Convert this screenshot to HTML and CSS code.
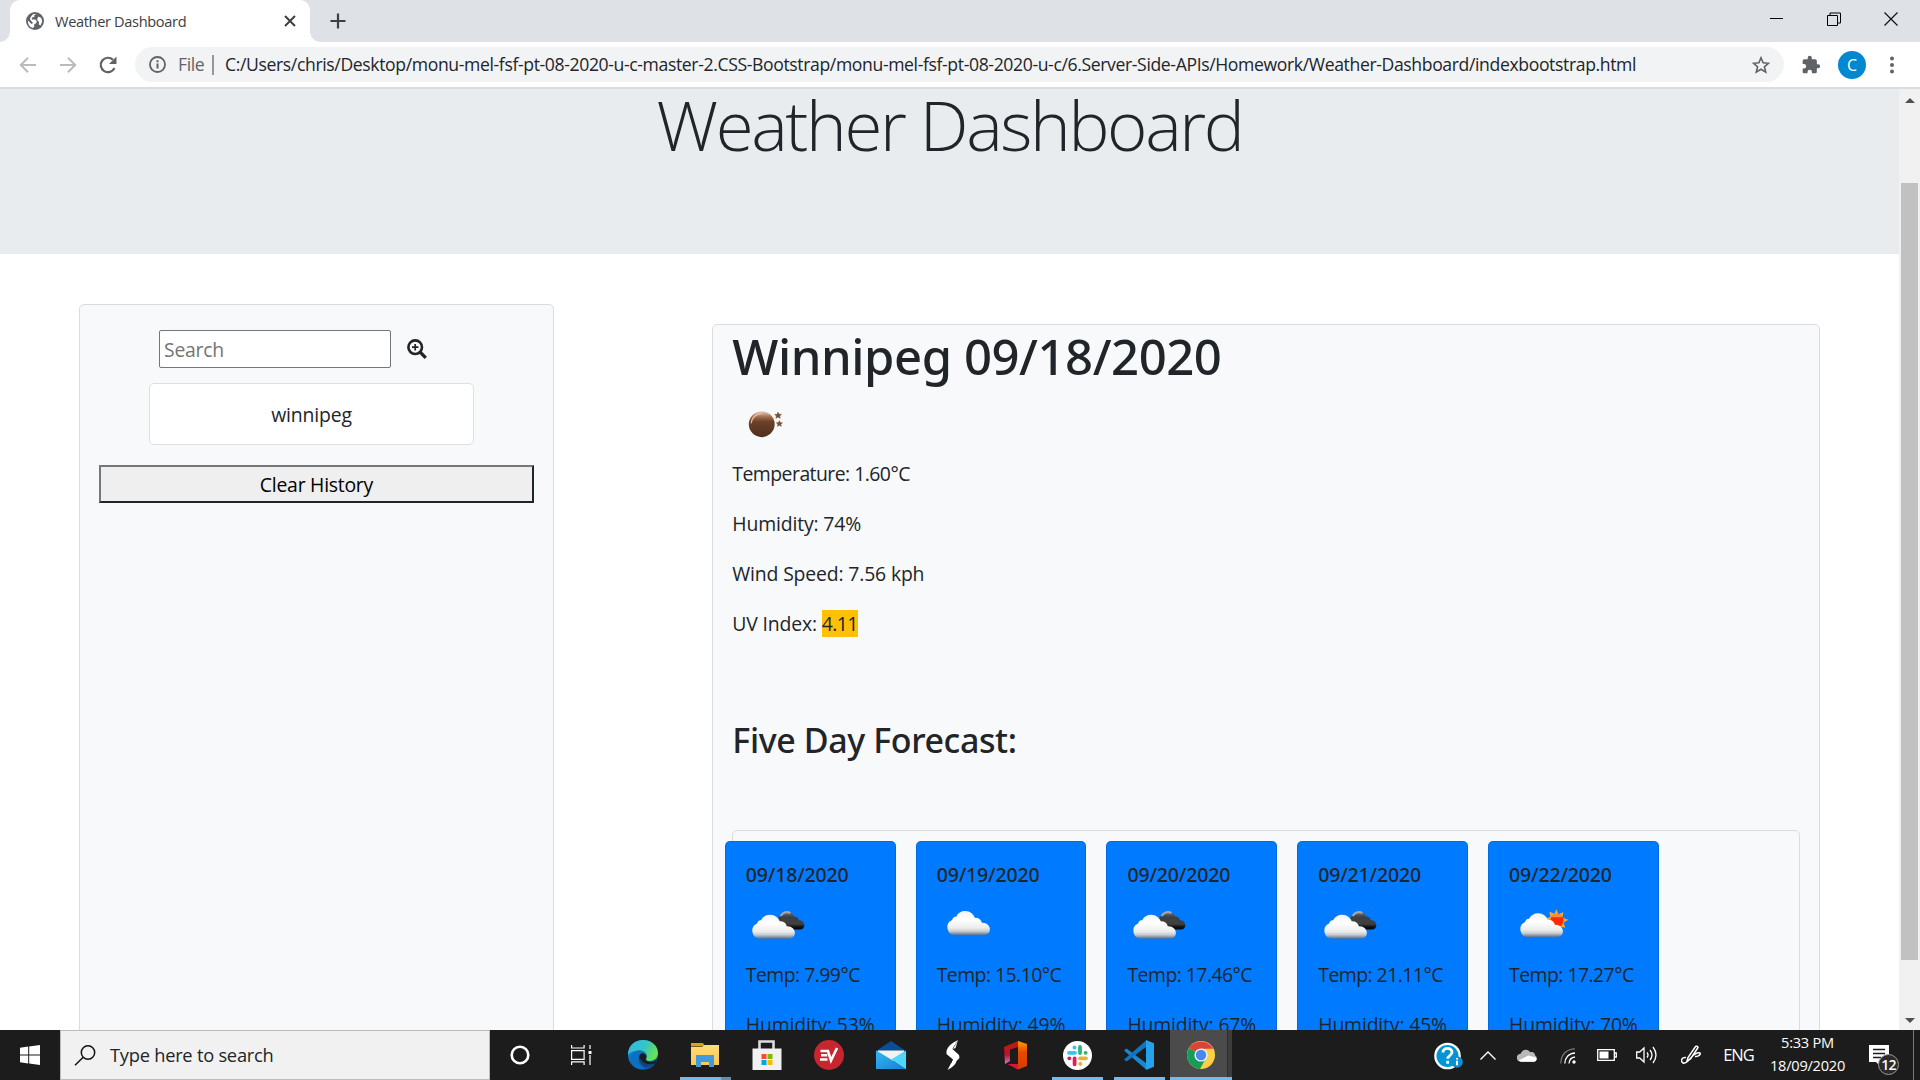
FILE: index.html
```html
<!DOCTYPE html>
<html lang="en">
<head>
<meta charset="utf-8">
<title>Weather Dashboard</title>
<link rel="stylesheet" href="styles.css">
</head>
<body>
<svg class="defs" width="0" height="0" aria-hidden="true">
  <defs>
    <linearGradient id="white" gradientUnits="userSpaceOnUse" x1="0" y1="0" x2="0" y2="24">
      <stop offset="0" stop-color="#f2f2f2"/><stop offset=".35" stop-color="#fff"/><stop offset=".7" stop-color="#ececec"/><stop offset=".84" stop-color="#c4c8cc"/><stop offset="1" stop-color="#4f6b90"/>
    </linearGradient>
    <linearGradient id="dark" gradientUnits="userSpaceOnUse" x1="0" y1="0" x2="0" y2="24">
      <stop offset="0" stop-color="#75777a"/><stop offset=".3" stop-color="#3c3f42"/><stop offset=".7" stop-color="#3f3f40"/><stop offset=".85" stop-color="#111"/><stop offset="1" stop-color="#05080f"/>
    </linearGradient>
    <linearGradient id="moon" x1="0" y1="0" x2="0" y2="1">
      <stop offset="0" stop-color="#e9cdbd"/><stop offset=".22" stop-color="#a06c4c"/><stop offset=".4" stop-color="#6d4128"/><stop offset="1" stop-color="#4e2f1e"/>
    </linearGradient>
    <linearGradient id="edgeTop" x1="0" y1="0" x2="1" y2=".4"><stop offset="0" stop-color="#2fb6ec"/><stop offset=".6" stop-color="#35c6c0"/><stop offset="1" stop-color="#66e055"/></linearGradient>
    <linearGradient id="edgeLow" x1="0" y1="0" x2=".6" y2="1"><stop offset="0" stop-color="#1592e0"/><stop offset="1" stop-color="#0c53a0"/></linearGradient>
    <linearGradient id="folder" x1="0" y1="0" x2="0" y2="1"><stop offset="0" stop-color="#ffdd7b"/><stop offset="1" stop-color="#fbc94f"/></linearGradient>
    <linearGradient id="office" x1="0" y1="0" x2="0" y2="1"><stop offset="0" stop-color="#c11a0c"/><stop offset=".6" stop-color="#b8152c"/><stop offset="1" stop-color="#cf7bd0"/></linearGradient>
    <linearGradient id="officeR" x1="0" y1="0" x2="0" y2="1"><stop offset="0" stop-color="#ff9a00"/><stop offset=".4" stop-color="#e64a00"/><stop offset="1" stop-color="#d83b01"/></linearGradient>
    <linearGradient id="mail" x1="0" y1="0" x2="1" y2="1"><stop offset="0" stop-color="#33b7f2"/><stop offset="1" stop-color="#1580d2"/></linearGradient>
    <path id="cloud" d="M8 24A8 8 0 0 1 5 8.700C6 5 9 5.500 9 5.500A10 10 0 0 1 18 0C23 0 26 3 27.500 6.500A7 7 0 0 1 34.500 11.500C39 11 42.500 14.500 42.500 18C42.500 21.500 40 24 36 24Z"/>
    <symbol id="brokenClouds" viewBox="0 0 62 62">
      <g transform="translate(29 14.500) scale(.68 .74)"><use href="#cloud" fill="url(#dark)"/><path d="M8 6C10 1 18-1 22 2" fill="none" stroke="#a4a6aa" stroke-width="3"/></g>
      <use href="#cloud" x="6" y="17.500" fill="url(#white)"/>
    </symbol>
    <symbol id="scattered" viewBox="0 0 62 62"><use href="#cloud" x="10" y="14" fill="url(#white)"/></symbol>
    <symbol id="fewClouds" viewBox="0 0 62 62">
      <path d="M47 12l2 5 5-2-1 5.500 6 2-5 3 2 5-5-1-3 4-3-5-6 1 2-5-5-3 5-2-1-5 5 2z" fill="#f7a52c"/>
      <circle cx="47.500" cy="23.500" r="6.500" fill="#ff2a00"/><path d="M42 20a6.500 6.500 0 0 1 11 0z" fill="#ff8a3a"/>
      <use href="#cloud" x="11" y="16" fill="url(#white)"/>
    </symbol>
  </defs>
</svg>

<header class="tabstrip">
  <div class="tab">
    <svg width="18" height="18" viewBox="0 0 18 18"><circle cx="9" cy="9" r="9" fill="#5f6368"/><path d="M10.500 1.800L8.200 3.200 8.400 5 6 5.600 5.800 7.600H9.500L10.800 9.500 10 11.500 8.300 12 8.200 14.500 7 16C3.500 15.200 1.700 12 1.900 8.500L5.500 12 7 11 4 7.500 4.500 5.200 7 2.200zM12.500 4.500L15.300 6 16.200 9.500 14.500 13.500 12.800 12.500 13 10 11.200 8 11.500 6.200z" fill="#fff"/></svg>
    <span class="tab-title">Weather Dashboard</span>
    <svg class="tab-close" width="12" height="12" viewBox="0 0 12 12"><path d="M1 1l10 10M11 1L1 11" stroke="#3c4043" stroke-width="2"/></svg>
  </div>
  <svg class="new-tab" width="16" height="16" viewBox="0 0 16 16"><path d="M8 .5v15M.5 8h15" stroke="#3c4043" stroke-width="2.200"/></svg>
  <div class="window-controls">
    <svg width="14" height="14" viewBox="0 0 14 14"><path d="M0 6.500h13" stroke="#000"/></svg>
    <svg width="14" height="14" viewBox="0 0 14 14"><path d="M.5 3.500h10v10h-10zM3 3V1h10.500v10H11" fill="none" stroke="#000"/></svg>
    <svg width="14" height="14" viewBox="0 0 14 14"><path d="M.5.5l13 13M13.500.5l-13 13" stroke="#111" stroke-width="1.200"/></svg>
  </div>
</header>

<nav class="toolbar">
  <svg width="18" height="16" viewBox="0 0 18 16"><path d="M17 8H2M9 .8L1.800 8 9 15.200" fill="none" stroke="#b9bbbe" stroke-width="2"/></svg>
  <svg width="18" height="16" viewBox="0 0 18 16"><path d="M1 8h15M9 .8L16.200 8 9 15.200" fill="none" stroke="#b9bbbe" stroke-width="2"/></svg>
  <svg width="18" height="18" viewBox="0 0 18 18"><path d="M15.500 12A7.200 7.200 0 1 1 14 3.800" fill="none" stroke="#5f6368" stroke-width="2.200"/><path d="M17.500.5v7.500H10z" fill="#5f6368"/></svg>
  <div class="omnibox">
    <svg width="17" height="17" viewBox="0 0 17 17"><circle cx="8.500" cy="8.500" r="7.500" fill="none" stroke="#5f6368" stroke-width="1.800"/><path d="M8.500 7.500v5M8.500 4.200v2" stroke="#5f6368" stroke-width="2"/></svg>
    <span class="scheme">File</span>
    <span class="url">C:/Users/chris/Desktop/monu-mel-fsf-pt-08-2020-u-c-master-2.CSS-Bootstrap/monu-mel-fsf-pt-08-2020-u-c/6.Server-Side-APIs/Homework/Weather-Dashboard/indexbootstrap.html</span>
    <svg class="star" width="18" height="18" viewBox="0 0 18 18"><path d="M9 1.800l2.100 5 5.400.5-4.100 3.500 1.300 5.300L9 13.300l-4.700 2.800 1.300-5.300-4.100-3.500 5.400-.5z" fill="none" stroke="#5f6368" stroke-width="1.600"/></svg>
  </div>
  <svg width="20" height="20" viewBox="0 0 24 24"><path fill="#5f6368" d="M20.500 11H19V7c0-1.100-.9-2-2-2h-4V3.500a2.500 2.500 0 0 0-5 0V5H4c-1.100 0-2 .9-2 2v3.800h1.500a2.700 2.700 0 0 1 0 5.400H2V20c0 1.100.9 2 2 2h3.800v-1.500a2.700 2.700 0 0 1 5.400 0V22H17c1.100 0 2-.9 2-2v-4h1.500a2.500 2.500 0 0 0 0-5z"/></svg>
  <span class="avatar">C</span>
  <svg width="4" height="18" viewBox="0 0 4 18"><g fill="#5f6368"><circle cx="2" cy="2.500" r="2"/><circle cx="2" cy="9" r="2"/><circle cx="2" cy="15.500" r="2"/></g></svg>
</nav>

<div class="viewport">
  <div class="page">
    <div class="jumbotron"><h1 class="display">Weather Dashboard</h1></div>
    <div class="columns">
      <aside class="sidebar">
        <div class="search-row">
          <input class="search" type="text" placeholder="Search">
          <svg width="20" height="20" viewBox="0 0 20 20"><circle cx="8.200" cy="8.200" r="6.800" fill="none" stroke="#212529" stroke-width="2.600"/><path d="M8.200 5v6.400M5 8.200h6.400" stroke="#212529" stroke-width="1.700"/><path d="M13 13l5.800 5.800" stroke="#212529" stroke-width="3.200"/></svg>
        </div>
        <div class="history-item">winnipeg</div>
        <button class="clear">Clear History</button>
      </aside>
      <main class="weather">
        <h2 class="city">Winnipeg 09/18/2020</h2>
        <svg class="sky" viewBox="0 0 62 62"><circle cx="29.500" cy="28" r="12.800" fill="url(#moon)"/><path d="M19 27a10.500 10.500 0 0 1 10-9.500" fill="none" stroke="#e2c0ab" stroke-width="1.300"/><path d="M45.700 16l1 2.200 2.300.1-1.700 1.500.6 2.300-2.200-1.200-2.200 1.200.6-2.300-1.700-1.500 2.300-.1zM47 24.500l.9 2 2.100.1-1.600 1.400.5 2.100L47 29l-1.900 1.100.5-2.100-1.600-1.400 2.100-.1z" fill="#7a4f36" stroke="#7a4f36" stroke-width=".6"/></svg>
        <p class="tight">Temperature: 1.60°C</p>
        <p>Humidity: 74%</p>
        <p>Wind Speed: 7.56 kph</p>
        <p>UV Index: <span class="uv">4.11</span></p>
        <h3 class="forecast-title">Five Day Forecast:</h3>
        <div class="forecast">
          <article class="day"><h5>09/18/2020</h5><svg class="sky"><use href="#brokenClouds"/></svg><p class="tight">Temp: 7.99°C</p><p>Humidity: 53%</p></article>
          <article class="day"><h5>09/19/2020</h5><svg class="sky"><use href="#scattered"/></svg><p class="tight">Temp: 15.10°C</p><p>Humidity: 49%</p></article>
          <article class="day"><h5>09/20/2020</h5><svg class="sky"><use href="#brokenClouds"/></svg><p class="tight">Temp: 17.46°C</p><p>Humidity: 67%</p></article>
          <article class="day"><h5>09/21/2020</h5><svg class="sky"><use href="#brokenClouds"/></svg><p class="tight">Temp: 21.11°C</p><p>Humidity: 45%</p></article>
          <article class="day"><h5>09/22/2020</h5><svg class="sky"><use href="#fewClouds"/></svg><p class="tight">Temp: 17.27°C</p><p>Humidity: 70%</p></article>
        </div>
      </main>
    </div>
  </div>
  <div class="scrollbar">
    <svg width="10" height="5" viewBox="0 0 10 5"><path d="M5 0l5 5H0z" fill="#505050"/></svg>
    <div class="thumb"></div>
    <svg width="10" height="5" viewBox="0 0 10 5"><path d="M5 5l5-5H0z" fill="#505050"/></svg>
  </div>
</div>

<footer class="taskbar">
  <div class="start"><svg width="20" height="20" viewBox="0 0 20 20"><path d="M0 2.700l8.200-1.100v7.900H0zM9.200 1.400L20 0v9.500H9.200zM0 10.500h8.200v7.900L0 17.300zM9.200 10.500H20V20L9.200 18.600z" fill="#fff"/></svg></div>
  <div class="task-search">
    <svg width="22" height="21" viewBox="0 0 22 21"><circle cx="14" cy="7.500" r="6.700" fill="none" stroke="#111" stroke-width="1.500"/><path d="M9.200 12.200L1 20.300" stroke="#111" stroke-width="1.500"/></svg>
    <span>Type here to search</span>
  </div>
  <div class="app cortana"><svg width="20" height="20" viewBox="0 0 20 20"><circle cx="10" cy="10" r="8.300" fill="none" stroke="#fff" stroke-width="2.600"/></svg></div>
  <div class="app"><svg width="21" height="20" viewBox="0 0 21 20"><path d="M.6 5.600h12.500v8.800H.6zM.6 0v3h12.500V0M.6 20v-3.200h12.500V20M19 0v4M19 10v10" fill="none" stroke="#fff" stroke-width="1.200"/><path d="M17.500 6h3v3h-3z" fill="#fff"/></svg></div>
  <div class="app"><svg width="30" height="30" viewBox="0 0 30 30"><circle cx="15" cy="15" r="15" fill="url(#edgeLow)"/><path d="M0 13C1 5 7 0 15 0 24 0 30 6 30 13c0 5-4 8-8.500 8-3.500 0-4.500-1-3.500-2.500 2-3 0-8-7-8C6 10.500 2 12 0 15z" fill="url(#edgeTop)"/><path d="M10.500 14.500C8 20 11 26 17 28.500c-5 2-12-1-14-7-1-5 2-10 8-11 5 0 8 3 7.500 6.500-1-2-5-5-8-2.500z" fill="#0b6fc2"/><path d="M18.500 18c-1 2 0 3.500 3.500 3.500 2.800 0 5-.8 7-2.500-2 5-6 8-11 8-5-2-8-6-7-11z" fill="#133f7c"/><path d="M12 15c1-3 6-1.500 6.500 1.500-.3 1.500-1.500 2.500-.5 4l4 1.700c3 .2 5-.8 7.500-3l.5-1.700-3 7c1-2-5 .5-9-1-3.500-1.500-7-5-6.500-8.500z" fill="#1c1c1c"/></svg></div>
  <div class="app running multi"><svg width="28" height="24" viewBox="0 0 28 24"><path d="M0 0h12l2 3.500H0z" fill="#e0a010"/><path d="M0 4h11l2.500-2H28v20H0z" fill="url(#folder)"/><path d="M5 24V12h18v12h-5v-5h-8v5z" fill="#3f9bdc"/></svg></div>
  <div class="app"><svg width="30" height="30" viewBox="0 0 30 30"><path d="M7.500 9V1.500h14V9" fill="none" stroke="#dcdcdc" stroke-width="2.600"/><path d="M.5 8.500h29V30H.5z" fill="#f1f1f1"/><path d="M9.500 14h5v5h-5z" fill="#f25022"/><path d="M15.500 14h5v5h-5z" fill="#7fba00"/><path d="M9.500 20h5v5h-5z" fill="#00a4ef"/><path d="M15.500 20h5v5h-5z" fill="#ffb900"/></svg></div>
  <div class="app"><svg width="30" height="30" viewBox="0 0 30 30"><circle cx="15" cy="15" r="15" fill="#c7262f"/><path d="M6.500 11H14l3 9.500L23 8M13.300 15.200H7M13.500 19.500H6" fill="none" stroke="#fff" stroke-width="2.600"/></svg></div>
  <div class="app"><svg width="30" height="29" viewBox="0 0 30 29"><path d="M0 10L15 0l15 10v4H0z" fill="#0a4f96"/><path d="M2 9.500h26V20H2z" fill="#f2f2f2"/><path d="M0 9.500l15 9-15 10z" fill="#34b8f2"/><path d="M30 9.500L15 18.500 30 28.500z" fill="#4fd6fb"/><path d="M0 9.500l30 18.500H0z" fill="url(#mail)"/></svg></div>
  <div class="app"><svg width="14" height="30" viewBox="0 0 14 30"><path d="M12 0C6 3 2 6 .5 11v3L7 19.500 1.500 30C7 27 10 24 10.500 21l3-3-.5-3L6.500 9z" fill="#fff"/><path d="M12 0L8.500 9.500 6.500 9zM6.500 20L5 23.500V19z" fill="#1c1c1c"/><path d="M12 0L9.500 8 7 9z" fill="#fff"/></svg></div>
  <div class="app"><svg width="23" height="29" viewBox="0 0 23 29"><path d="M0 6L14 0v6L6 8.500V20L1 23z" fill="url(#office)"/><path d="M14 0l9 3v22l-9 3.500z" fill="url(#officeR)"/><path d="M3.500 23H14v5.800z" fill="#e3113a"/></svg></div>
  <div class="app running"><svg width="29" height="29" viewBox="0 0 29 29"><circle cx="14.500" cy="14.500" r="14.500" fill="#fff"/><g fill="none" stroke-width="3.800" stroke-linecap="round"><path d="M6 11.800h6M11.500 6.300v.4" stroke="#36c5f0"/><path d="M17 6v6M22.500 11.800h.2" stroke="#2eb67d"/><path d="M17 17.300h6M17.300 22.700v.2" stroke="#ecb22e"/><path d="M11.600 17.300v6M6.200 17.300h.2" stroke="#e01e5a"/></g></svg></div>
  <div class="app running"><svg width="30" height="30" viewBox="0 0 30 30"><path d="M0 10.500L2.500 8.500 22 23v6.500z" fill="#1a86cf"/><path d="M0 19.500L2.500 21.500 22 7V.5z" fill="#0f75bd"/><path d="M22 0l8 3.200v23.600L22 30z" fill="#26a1ee"/></svg></div>
  <div class="app running active"><svg width="28" height="28" viewBox="0 0 28 28"><circle cx="14" cy="14" r="14" fill="#fbcf48"/><path d="M14 14L1.900 7A14 14 0 0 1 26.100 7.800H14z" fill="#dc4437"/><path d="M14 14L1.900 7A14 14 0 0 0 13 28l6-11z" fill="#159c58"/><circle cx="14" cy="14" r="6.600" fill="#f1f1f1"/><circle cx="14" cy="14" r="5.200" fill="#4688f1"/></svg></div>

  <div class="tray">
    <div class="t-help"><svg width="30" height="28" viewBox="0 0 30 28"><circle cx="13.500" cy="14" r="13.300" fill="#fff"/><circle cx="13.500" cy="14" r="11" fill="#0096d6"/><path d="M9 10.500C9 5 18 5 18 10.300c0 3.200-4.300 3.200-4.300 6.500M13.700 18.800v3" fill="none" stroke="#fff" stroke-width="2.800"/><circle cx="23" cy="20" r="5.800" fill="#0f8fd0"/><path d="M23 18.800v4.500M23 16v1.600" stroke="#fff" stroke-width="2"/></svg></div>
    <div class="t-chevron"><svg width="16" height="9" viewBox="0 0 16 9"><path d="M.5 8.500L8 1l7.500 7.500" fill="none" stroke="#fff" stroke-width="1.400"/></svg></div>
    <div class="t-cloud"><svg width="20" height="13" viewBox="0 0 20 13"><path d="M4 12.800a4 4 0 0 1-.4-8C5 1 10-1 13 3c4-.5 5 1.500 5 3.300a3.500 3.500 0 0 1-1.500 6.500z" fill="#b8b8b8"/><path d="M1.500 11.500L11.500 6.500l7.500 2c1.500 2 0 4.300-2.500 4.300H4z" fill="#fff"/></svg></div>
    <div class="t-wifi"><svg width="16" height="16" viewBox="0 0 16 16"><path d="M.8 15.500C1 7 6 1 15 .8" fill="none" stroke="#777" stroke-width="1.300"/><path d="M4.800 15.500C5 9.500 9 5.200 15 5M9 15.500C9.300 12 11.500 9.300 15 9" fill="none" stroke="#fff" stroke-width="1.300"/><circle cx="14" cy="14" r="1.700" fill="#fff"/></svg></div>
    <div class="t-battery"><svg width="20" height="12" viewBox="0 0 20 12"><path d="M.7.700h16.600v10.600H.7zM17.500 4h1.800v4h-1.800" fill="none" stroke="#fff" stroke-width="1.300"/><path d="M2.500 2.500h9v7h-9z" fill="#fff"/></svg></div>
    <div class="t-speaker"><svg width="21" height="18" viewBox="0 0 21 18"><path d="M.7 6h3L8 2v14l-4.300-4h-3z" fill="none" stroke="#fff" stroke-width="1.300"/><path d="M11 6.500q2 2.500 0 5M14 4q4 5 0 10M17 1q6 8 0 16" fill="none" stroke="#fff" stroke-width="1.300"/></svg></div>
    <div class="t-pen"><svg width="20" height="20" viewBox="0 0 20 20"><path d="M6 16L7 12.500 14.500 1.500q2-1 2.500 1L9.500 14zM5 12.500c-4-.5-6 3-3 5.500 3 1.500 6-3 9-6.500s8-5 8.300-2.800c-.3 1.800-3 3-5.300 2.800" fill="none" stroke="#fff" stroke-width="1.500"/></svg></div>
    <div class="t-lang">ENG</div>
    <div class="t-clock"><span>5:33 PM</span><span>18/09/2020</span></div>
    <div class="t-action"><svg width="20" height="21" viewBox="0 0 20 21"><path d="M0 0h20v17h-9v4l-4-4H0z" fill="#fff"/><path d="M4 4.500h12M4 8.500h12M4 12.500h8" stroke="#1c1c1c" stroke-width="1.300"/></svg><span class="badge">12</span></div>
  </div>
</footer>
</body>
</html>
```
FILE: styles.css
```css
* { box-sizing: border-box; }
body {
  margin: 0; width: 1920px; height: 1080px; overflow: hidden;
  display: flex; flex-direction: column;
  font: 400 19.4px/30px "Open Sans", "Noto Sans", sans-serif;
  letter-spacing: -.16px; color: #212529; background: #fff;
}
svg { display: block; flex: none; }
.defs { position: absolute; }
h1, h2, h3, h5, p { margin: 0; }

/* Browser chrome */
.tabstrip { height: 42px; flex: none; background: #dee1e6; display: flex; align-items: center; padding-left: 10px; }
.tab {
  position: relative; width: 300px; height: 42px; background: #fff; border-radius: 10px 10px 0 0;
  display: flex; align-items: center; padding: 0 14px 0 16px;
}
.tab::before, .tab::after { content: ""; position: absolute; bottom: 0; width: 10px; height: 10px; }
.tab::before { left: -10px; background: radial-gradient(circle at 0 0, transparent 9.500px, #fff 10px); }
.tab::after { right: -10px; background: radial-gradient(circle at 100% 0, transparent 9.500px, #fff 10px); }
.tab-title { margin-left: 11px; padding-bottom: 1px; font-size: 14.6px; letter-spacing: -.35px; color: #3c4043; }
.tab-close { margin-left: auto; }
.new-tab { margin-left: 20px; }
.window-controls { margin-left: auto; display: flex; gap: 43px; padding: 0 22px 5px 0; }

.toolbar { height: 47px; flex: none; display: flex; align-items: center; background: #fff; border-bottom: 2px solid #d9dce0; padding: 0 26px 0 19px; }
.toolbar > svg:nth-child(2) { margin-left: 22px; }
.toolbar > svg:nth-child(3) { margin-left: 22px; }
.omnibox { width: 1650px; height: 35px; margin: 0 17px 0 18px; padding: 0 14px; border-radius: 18px; background: #f1f3f4; display: flex; align-items: center; font-size: 17.6px; }
.scheme { margin-left: 12px; width: 36px; height: 20px; line-height: 18px; border-right: 2px solid #94979b; color: #5f6368; letter-spacing: -.4px; }
.url { margin-left: 11px; padding-bottom: 1px; letter-spacing: -.37px; white-space: nowrap; }
.star { margin-left: auto; }
.avatar { width: 28px; height: 28px; margin: 0 24px 0 17px; border-radius: 50%; background: #0288d1; color: #fff; font-size: 16px; line-height: 28px; text-align: center; }

/* Page */
.viewport { height: 941px; flex: none; display: flex; overflow: hidden; }
.page { width: 1899px; height: 941px; overflow: hidden; }
.jumbotron { height: 165px; background: #e9ecef; text-align: center; }
.display { font-weight: 300; font-size: 69px; line-height: 71px; letter-spacing: -2.400px; }
.columns { display: flex; align-items: flex-start; padding: 50px 79px 0; }
.sidebar, .weather { background: #f8f9fa; border: 1px solid #dcdcdd; border-radius: 5px; }
.sidebar { width: 475px; height: 1000px; padding: 25px 19px 0 19px; display: flex; flex-direction: column; }
.search-row { display: flex; align-items: center; gap: 16px; padding-left: 60px; }
.search { width: 232px; height: 38px; padding: 1px 4px 0; border: 1px solid #767676; border-radius: 2px; background: #fff; font: inherit; letter-spacing: -.25px; }
.search::placeholder { color: #757575; }
.history-item { width: 325px; height: 62px; margin: 15px 0 0 50px; background: #fff; border: 1px solid #dfdfdf; border-radius: 5px; line-height: 62px; text-align: center; }
.clear { height: 38px; margin-top: 20px; padding: 2px 0 0; font: inherit; letter-spacing: -.25px; color: #000; background: #efefef; border: 2px solid; border-color: #76777a #212529 #212529 #76777a; }

.weather { width: 1108px; height: 1200px; margin: 20px 0 0 158.500px; padding: 1px 19px 0 19px; }
.city { font: 500 49px/60px "Noto Sans", sans-serif; letter-spacing: -.45px; margin-bottom: 10px; }
.sky { width: 62.500px; height: 62.500px; }
.weather p { margin-bottom: 20px; white-space: nowrap; }
.weather .tight { letter-spacing: -.53px; }
.uv { background: #ffc107; letter-spacing: -.6px; }
.forecast-title { margin: 80px 0 69px; font: 500 34px/42px "Noto Sans", sans-serif; letter-spacing: -.4px; }
.forecast { height: 400px; padding-top: 10px; border: 1px solid #dcdcdd; border-radius: 5px; display: flex; gap: 20px; }
.day { width: 170.800px; height: 350px; padding: 21px 0 0 20px; background: #007bff; border: 1px solid rgba(0, 0, 0, .125); border-radius: 5px; }
.day:first-child { margin-left: -8.500px; }
.day h5 { margin-bottom: 10px; font: 500 19.5px/24px "Noto Sans", sans-serif; letter-spacing: -.15px; }
.day .sky { margin-bottom: 1px; }

.scrollbar { width: 21px; background: #f1f1f1; display: flex; flex-direction: column; align-items: center; padding: 9px 0 7px; }
.thumb { width: 17px; height: 777px; margin: 80px 0 auto; background: #c1c1c1; }

/* Taskbar */
.taskbar { height: 50px; flex: none; display: flex; background: #1c1c1c; }
.start { width: 60px; display: flex; align-items: center; justify-content: center; }
.task-search { width: 430px; border: 1px solid #bbb; background: #f1f1f1; display: flex; align-items: center; gap: 14px; padding-left: 13px; font-size: 18.3px; letter-spacing: -.25px; }
.app { width: 62px; height: 50px; display: flex; align-items: center; justify-content: center; }
.cortana { width: 60px; }
.running { background: linear-gradient(#76b9ed, #76b9ed) center bottom / 51px 3px no-repeat; }
.multi { background: linear-gradient(90deg, #76b9ed 41px, #5f8fb5 41px) center bottom / 51px 3px no-repeat; }
.active { background: linear-gradient(#76b9ed, #76b9ed) center bottom / 62px 3px no-repeat, linear-gradient(90deg, #4b4b4b 57px, #2e2e2e 57px, #2e2e2e 58px, #3c3c3c 58px); }
.tray { margin-left: auto; width: 489px; display: flex; color: #fff; }
.tray > div { display: flex; align-items: center; justify-content: center; flex: none; }
.t-help { width: 36px; padding-top: 2px; }
.t-chevron { width: 42px; }
.t-cloud { width: 36px; }
.t-wifi { width: 45px; padding-top: 2px; }
.t-battery { width: 34px; }
.t-speaker { width: 44px; }
.t-pen { width: 46px; }
.t-lang { width: 49px; font-size: 16.5px; letter-spacing: -1px; }
.tray .t-clock { width: 89px; flex-direction: column; font-size: 14.6px; line-height: 23px; letter-spacing: -.25px; padding-bottom: 2px; }
.tray .t-action { position: relative; width: 65px; justify-content: flex-start; margin-left: -3px; padding-left: 20px; border-right: 1px solid #777; }
.badge { position: absolute; left: 29px; top: 24px; width: 21px; height: 21px; border: 1px solid #999; border-radius: 50%; background: #2b2b2b; font-size: 14px; font-weight: 600; line-height: 19px; text-align: center; letter-spacing: -.8px; }
```
